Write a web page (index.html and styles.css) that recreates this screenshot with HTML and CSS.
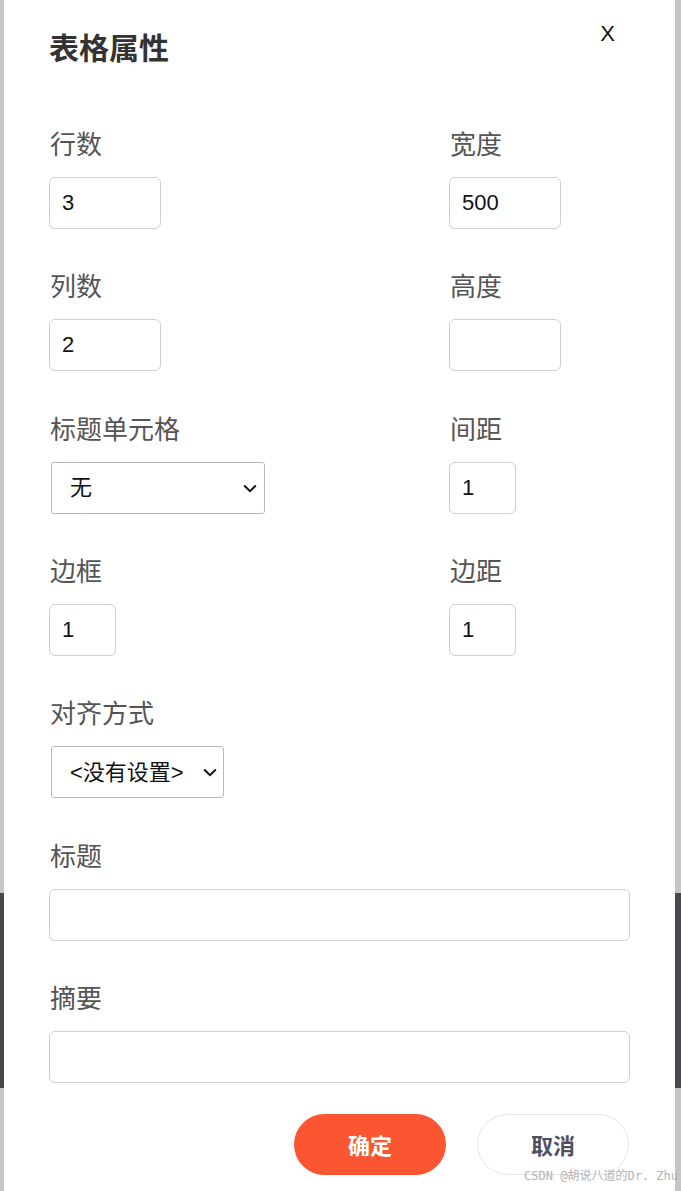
FILE: index.html
```html
<!DOCTYPE html>
<html lang="zh">
<head>
<meta charset="utf-8">
<title>表格属性</title>
<link rel="stylesheet" href="styles.css">
</head>
<body>
<div class="dialog">
  <h1 class="dialog-title">表格属性</h1>
  <span class="close">X</span>
  <form class="form">
    <div class="field">
      <label class="label">行数</label>
      <input class="input w-md" type="text" value="3">
    </div>
    <div class="field">
      <label class="label">宽度</label>
      <input class="input w-md" type="text" value="500">
    </div>
    <div class="field">
      <label class="label">列数</label>
      <input class="input w-md" type="text" value="2">
    </div>
    <div class="field">
      <label class="label">高度</label>
      <input class="input w-md" type="text" value="">
    </div>
    <div class="field">
      <label class="label">标题单元格</label>
      <div class="select-wrap w-sel1">
        <select class="select"><option>无</option></select>
        <svg class="chev" width="14" height="9" viewBox="0 0 14 9"><path d="M1.2 1.5 L7 7.2 L12.8 1.5" fill="none" stroke="#111" stroke-width="2"/></svg>
      </div>
    </div>
    <div class="field">
      <label class="label">间距</label>
      <input class="input w-sm" type="text" value="1">
    </div>
    <div class="field">
      <label class="label">边框</label>
      <input class="input w-sm" type="text" value="1">
    </div>
    <div class="field">
      <label class="label">边距</label>
      <input class="input w-sm" type="text" value="1">
    </div>
    <div class="field wide">
      <label class="label">对齐方式</label>
      <div class="select-wrap w-sel2">
        <select class="select"><option>&lt;没有设置&gt;</option></select>
        <svg class="chev" width="14" height="9" viewBox="0 0 14 9"><path d="M1.2 1.5 L7 7.2 L12.8 1.5" fill="none" stroke="#111" stroke-width="2"/></svg>
      </div>
    </div>
    <div class="field wide">
      <label class="label">标题</label>
      <input class="input w-full" type="text" value="">
    </div>
    <div class="field wide">
      <label class="label">摘要</label>
      <input class="input w-full" type="text" value="">
    </div>
  </form>
  <div class="actions">
    <button class="btn btn-primary" type="button">确定</button>
    <button class="btn btn-default" type="button">取消</button>
  </div>
</div>
<div class="watermark">CSDN @胡说八道的Dr. Zhu</div>
</body>
</html>
```

FILE: styles.css
```css
html, body {
  margin: 0;
  padding: 0;
  height: 1191px;
  overflow: hidden;
}
body {
  position: relative;
  background: linear-gradient(to bottom,
    #c6c6c6 0, #c6c6c6 893px,
    #47484d 893px, #47484d 1088px,
    #c6c6c6 1088px, #c6c6c6 100%);
  font-family: "Noto Sans CJK SC", "Noto Sans", sans-serif;
}
.dialog {
  position: relative;
  box-sizing: border-box;
  width: 671px;
  height: 1191px;
  margin-left: 4px;
  padding: 26px 46px 0 45px;
  background: #fff;
}
.dialog-title {
  margin: 0;
  font-size: 30px;
  line-height: 40px;
  font-weight: 700;
  color: #333;
}
.close {
  position: absolute;
  top: 22px;
  right: 60px;
  font-family: "Liberation Sans", Arial, sans-serif;
  font-size: 22px;
  line-height: 24px;
  color: #111;
}
.form {
  display: grid;
  grid-template-columns: 400px 1fr;
  row-gap: 38.33px;
  margin-top: 59px;
}
.field.wide {
  grid-column: 1 / -1;
}
.label {
  display: block;
  font-size: 26px;
  line-height: 36px;
  color: #555;
  margin-bottom: 16px;
  padding-left: 1px;
}
.input {
  display: block;
  box-sizing: border-box;
  height: 52px;
  margin: 0;
  padding: 0 0 0 12px;
  border: 1px solid #cfcfcf;
  border-radius: 6px;
  background: #fff;
  font-family: "Liberation Sans", Arial, sans-serif;
  font-size: 22px;
  color: #111;
  outline: none;
}
.w-md { width: 112px; }
.w-sm { width: 67px; }
.w-full { width: 581px; }
.select-wrap {
  position: relative;
  margin-left: 2px;
  height: 52px;
}
.w-sel1 { width: 214px; }
.w-sel2 { width: 173px; }
.select {
  -webkit-appearance: none;
  appearance: none;
  box-sizing: border-box;
  width: 100%;
  height: 52px;
  margin: 0;
  padding: 0 0 0 18px;
  border: 1px solid #b9b9b9;
  border-radius: 3px;
  background: #fff;
  font-family: "Liberation Sans", "Noto Sans CJK SC", sans-serif;
  font-size: 22px;
  color: #111;
  outline: none;
}
.chev {
  position: absolute;
  right: 8px;
  top: 22px;
  pointer-events: none;
}
.w-sel2 .chev { right: 7px; }
.actions {
  display: flex;
  justify-content: flex-end;
  gap: 31px;
  margin-top: 31px;
}
.btn {
  box-sizing: border-box;
  width: 152px;
  height: 61px;
  border-radius: 31px;
  font-family: "Noto Sans CJK SC", sans-serif;
  font-size: 22px;
  font-weight: 700;
  cursor: pointer;
}
.btn-primary {
  background: #fc5531;
  border: none;
  color: #fff;
}
.btn-default {
  background: #fff;
  border: 1px solid #e6e6e6;
  color: #4f5060;
}
.watermark {
  position: absolute;
  right: 3px;
  bottom: 8px;
  font-family: "DejaVu Sans Mono", "Noto Sans CJK SC", monospace;
  font-size: 12px;
  line-height: 14px;
  color: #b4b4b4;
  white-space: nowrap;
}
```
